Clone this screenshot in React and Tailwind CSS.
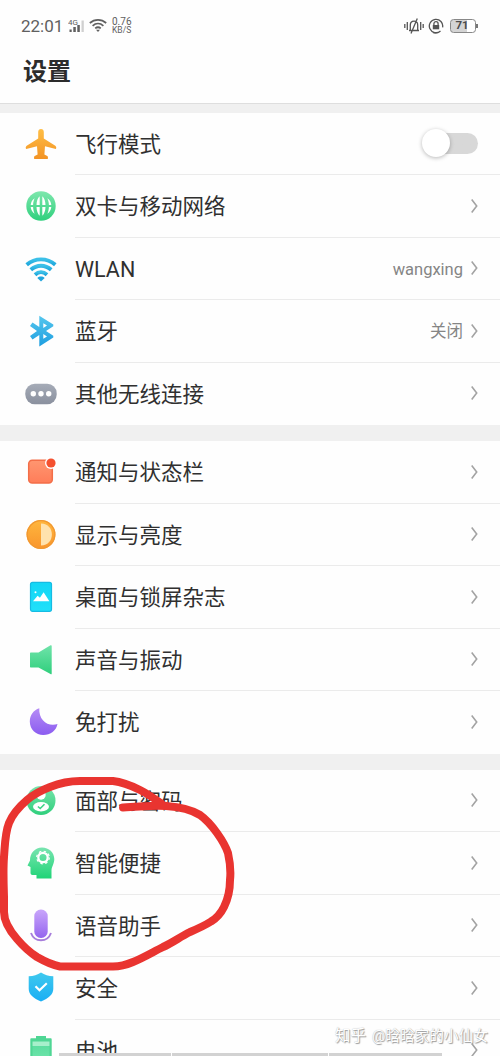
const CJK = 'font-["Roboto","Noto_Sans_CJK_SC",sans-serif]';

function Grad({ id, from, to }) {
  return (
    <linearGradient id={id} x1="0" y1="0" x2="0" y2="1">
      <stop offset="0" stopColor={from} />
      <stop offset="1" stopColor={to} />
    </linearGradient>
  );
}

function Glyph({ id, from, to, children }) {
  return (
    <svg width="34" height="34" viewBox="0 0 34 34" fill="none" className="block">
      <defs>
        <Grad id={id} from={from} to={to} />
      </defs>
      {children}
    </svg>
  );
}

const icons = {
  plane: (
    <Glyph id="plane" from="#ffbe45" to="#f29325">
      <path fill="url(#plane)" d="M17 2c1.700 0 2.800 1.200 2.800 3v6.500l11.500 7.300c1 .8 1.300 2.200.5 3.300L21 19.200l-.6 8.300 2.900 1.500c.8.700.8 2 .4 3H10.300c-.4-1-.4-2.300.4-3l2.900-1.500-.6-8.300-10.800 2.900c-.8-1.100-.5-2.500.5-3.300L14.200 11.500V5c0-1.800 1.100-3 2.800-3z" />
    </Glyph>
  ),
  globe: (
    <Glyph id="globe" from="#7ee7ad" to="#2fd07d">
      <circle cx="17" cy="17" r="14.700" fill="url(#globe)" />
      <path fill="#fff" d="M15.700 7.300v8.700h-3.200c.1-3.700 1.200-7 3.200-8.700zM18.300 7.300v8.700h3.200c-.1-3.700-1.200-7-3.200-8.700zM15.700 26.700v-8.700h-3.200c.1 3.700 1.200 7 3.200 8.700zM18.300 26.700v-8.700h3.200c-.1 3.700-1.200 7-3.200 8.700z" />
      <path fill="#fff" d="M10.700 9.300c-1 1.900-1.500 4.200-1.600 6.700H6.700c.2-2.900 1.700-5.200 4-6.700zM23.300 9.300c1 1.900 1.500 4.200 1.600 6.700h2.400c-.2-2.900-1.700-5.200-4-6.700zM10.700 24.700c-1-1.900-1.500-4.200-1.600-6.700H6.700c.2 2.900 1.700 5.200 4 6.700zM23.300 24.700c1-1.900 1.500-4.200 1.600-6.700h2.400c-.2 2.900-1.700 5.200-4 6.700z" />
    </Glyph>
  ),
  wifi: (
    <Glyph id="wifi" from="#3cc0e8" to="#20a8dc">
      <g stroke="url(#wifi)" strokeWidth="3.900">
        <path d="M2.700 12.700C11 5.600 23 5.600 31.300 12.700" />
        <path d="M6.800 17.800c6-5.400 14.400-5.400 20.400 0" />
        <path d="M11 22.700c3.600-3.200 8.400-3.200 12 0" />
      </g>
      <path fill="#20a5dd" d="M13.300 26c2.200-1.900 5.200-1.900 7.400 0L17 29.500z" />
    </Glyph>
  ),
  bluetooth: (
    <Glyph id="bt" from="#55c6ed" to="#1d9ee0">
      <path fill="url(#bt)" fillRule="evenodd" d="M15.300 1.800L29.300 10.500v1.700L22 17l7.300 4.800v1.700L15.300 32.500V21L8.500 25.500 6 22l7-5-7-5L8.500 8.500l6.800 4.500zM19.300 9.300v4.600l3.700-2.300zM19.300 20.100v4.600l3.700-2.300z" />
    </Glyph>
  ),
  more: (
    <Glyph id="more" from="#a5abb7" to="#8a909e">
      <rect x="1.300" y="6.700" width="31.400" height="20.600" rx="9.500" fill="url(#more)" />
      <g fill="#fff"><circle cx="9.300" cy="16.700" r="2.700" /><circle cx="17" cy="16.700" r="2.700" /><circle cx="24.700" cy="16.700" r="2.700" /></g>
    </Glyph>
  ),
  notice: (
    <Glyph id="notice" from="#ff9670" to="#ff7d59">
      <rect x="4.700" y="5.200" width="23.600" height="22.800" rx="3.500" fill="url(#notice)" stroke="#f36e48" strokeWidth="1.500" />
      <circle cx="27" cy="8" r="6" fill="#fff" />
      <circle cx="27" cy="8" r="4.600" fill="#f4512f" />
    </Glyph>
  ),
  display: (
    <Glyph id="display" from="#ffb73d" to="#f9952d">
      <circle cx="17" cy="16.500" r="14.500" fill="url(#display)" />
      <path fill="#ffe2ad" d="M17 5.500c14.500 0 14.500 22 0 22z" />
      <circle cx="17" cy="16.500" r="13.800" stroke="#f19831" strokeWidth="1.200" />
    </Glyph>
  ),
  desktop: (
    <Glyph id="desktop" from="#13d6f5" to="#21e0fa">
      <rect x="6.500" y="2.300" width="21" height="29" rx="2" fill="url(#desktop)" stroke="#16bbe3" strokeWidth="1.200" />
      <path fill="#fff" d="M9 21.200l4.600-5.500 2.300 2.100 3.700-5.600 5.800 9z" />
      <circle cx="11.500" cy="12.200" r="1" fill="#fff" />
    </Glyph>
  ),
  sound: (
    <Glyph id="sound" from="#70e3aa" to="#2fcf7c">
      <path fill="url(#sound)" d="M7 9.500h7.500L26.500 2.300c.8-.3 1.200 0 1.200.8v27.300c0 .8-.4 1.100-1.200.7L14.500 24.500H7c-.7 0-1-.3-1-1v-13c0-.7.3-1 1-1z" />
    </Glyph>
  ),
  moon: (
    <Glyph id="moon" from="#b58cf5" to="#8b5cf0">
      <path fill="url(#moon)" d="M15.300 3.200C9.500 5 5.800 10.200 5.800 16.500c0 7.800 6 13.600 13.500 13.600 7.200 0 13.100-4.500 14.200-11-9.500 3.200-19-4-18.200-15.900z" />
    </Glyph>
  ),
  face: (
    <Glyph id="face" from="#7be4ad" to="#2fcf7c">
      <circle cx="17" cy="16.500" r="14.500" fill="url(#face)" />
      <circle cx="17" cy="11" r="4.700" fill="#fff" />
      <ellipse cx="17" cy="22.700" rx="8" ry="4.700" fill="#fff" />
      <path d="M13.900 22.500l2.300 2 4.300-4.200" stroke="#3cd386" strokeWidth="1.600" />
    </Glyph>
  ),
  smart: (
    <Glyph id="smart" from="#79e4b0" to="#20d477">
      <path fill="url(#smart)" d="M18 1.500C25 1.500 30.300 6.500 30.300 13c0 5-2.800 7.500-2.800 11.500v8H12.500V29H8.500c-1.500 0-2-1-2-2.500V21l-3-1.500 2.500-5C6 7 11 1.500 18 1.500z" />
      <circle cx="19" cy="11.500" r="4.700" stroke="#fff" strokeWidth="2.300" />
      <circle cx="19" cy="11.500" r="6.300" stroke="#fff" strokeWidth="1.200" strokeDasharray="2.470 2.470" />
    </Glyph>
  ),
  voice: (
    <Glyph id="voice" from="#c9a6fb" to="#9465ee">
      <rect x="10.300" y="0.500" width="13.400" height="28.500" rx="6.500" fill="url(#voice)" />
      <path d="M7 24c3.500 9.700 16.500 9.700 20 0" stroke="#a77ddb" strokeWidth="1.900" />
    </Glyph>
  ),
  shield: (
    <Glyph id="shield" from="#3fc9ee" to="#1aaef4">
      <path fill="url(#shield)" d="M17 1.500c3.500 2.500 7.500 3.600 12.300 3.800v12.500c0 5.500-4.700 9.700-12.300 12.700-7.600-3-12.300-7.200-12.300-12.700V5.300C9.500 5.100 13.500 4 17 1.500z" />
      <path d="M11.500 15.200l4 4 7.300-7" stroke="#fff" strokeWidth="2.200" />
    </Glyph>
  ),
  battery: (
    <Glyph id="battery" from="#5ddda0" to="#78e8b0">
      <path fill="#4fd694" d="M12 2h10v2.300h4.500c.8 0 1.200.5 1.200 1.300V34H6.300V5.600c0-.8.4-1.300 1.200-1.300H12z" />
      <path fill="#a7efcb" d="M8.500 7.500h17V12h-17z" />
      <path fill="url(#battery)" d="M8.500 12h17v22h-17z" />
    </Glyph>
  ),
};

function Chevron() {
  return (
    <svg width="8" height="16" viewBox="0 0 8 16" fill="none" className="ml-[7px] block shrink-0">
      <path d="M1.700 1.600L6.700 8l-5 6.400" stroke="#a3a3a3" strokeWidth="1.600" />
    </svg>
  );
}

function Switch() {
  return (
    <div className="flex h-[21px] w-[56px] items-center rounded-full bg-linear-to-r from-transparent from-25% to-25% to-[#d8d8d8]">
      <div className="size-[28px] shrink-0 rounded-full bg-white shadow-[0_1px_4px_rgba(0,0,0,0.28)]" />
    </div>
  );
}

function Row({ icon, label, value, toggle, last }) {
  return (
    <div className="flex h-[62.5px] shrink-0 pl-[24px]">
      <div className="flex w-[51px] shrink-0 items-center">{icons[icon]}</div>
      <div className={`flex min-w-0 grow items-center border-b pr-[22px] ${last ? 'border-transparent' : 'border-[#ebebeb]'}`}>
        <span className="grow pt-[3px] text-[21.500px] leading-[30px] whitespace-nowrap text-[#303030]">{label}</span>
        {value && <span className="pt-[3px] text-[16.500px] leading-6 text-[#858585]">{value}</span>}
        {toggle ? <Switch /> : <Chevron />}
      </div>
    </div>
  );
}

const groups = [
  [
    { icon: 'plane', label: '飞行模式', toggle: true },
    { icon: 'globe', label: '双卡与移动网络' },
    { icon: 'wifi', label: 'WLAN', value: 'wangxing' },
    { icon: 'bluetooth', label: '蓝牙', value: '关闭' },
    { icon: 'more', label: '其他无线连接' },
  ],
  [
    { icon: 'notice', label: '通知与状态栏' },
    { icon: 'display', label: '显示与亮度' },
    { icon: 'desktop', label: '桌面与锁屏杂志' },
    { icon: 'sound', label: '声音与振动' },
    { icon: 'moon', label: '免打扰' },
  ],
  [
    { icon: 'face', label: '面部与密码' },
    { icon: 'smart', label: '智能便捷' },
    { icon: 'voice', label: '语音助手' },
    { icon: 'shield', label: '安全' },
    { icon: 'battery', label: '电池' },
  ],
];

function StatusBar() {
  return (
    <div className="flex h-[50px] shrink-0 items-center pt-[1px] pr-[22px] pl-[21px] text-[#606060]">
      <span className="w-[47px] text-[17px] leading-5">22:01</span>
      <svg width="17" height="16" viewBox="0 0 17 16" className="block">
        <text x="0" y="6.500" fontSize="8" fill="#606060">4G</text>
        <path fill="#606060" d="M1.500 11.500h2.200v2.500H1.500zM5.300 9h2.500v5H5.300zM9.300 7h2.500v7H9.300z" />
        <path fill="#d0d0d0" d="M13.500 2.500h2.300v11.500h-2.300z" />
      </svg>
      <svg width="18" height="15" viewBox="0 0 18 15" fill="none" stroke="#606060" strokeWidth="1.700" className="ml-[4px] block">
        <path d="M.8 5C5.600.8 12.400.8 17.200 5M3.600 7.800c3.200-2.800 7.600-2.800 10.800 0M6.200 10.400c1.700-1.400 3.900-1.400 5.600 0" />
        <path d="M7 11.800h4L9 14z" fill="#606060" stroke="none" />
      </svg>
      <div className="ml-[5px] grow leading-[9px]">
        <div className="text-[10px]">0.76</div>
        <div className="text-[8.500px]">KB/S</div>
      </div>
      <svg width="20" height="16" viewBox="0 0 20 16" fill="none" stroke="#555" strokeWidth="1.300" className="block">
        <path d="M.8 6v4M3.300 4v8M16.700 4v8M19.200 6v4M5 12.500h10M6.300 12.500V7c0-5.300 7.400-5.300 7.400 0v5.500M7 15.500L13.300.5" />
      </svg>
      <svg width="16" height="16" viewBox="0 0 16 16" fill="none" stroke="#555" strokeWidth="1.300" className="ml-[4px] block">
        <path d="M12.500 13A6.700 6.700 0 1 1 14.600 9.300M4.500 14.200a6.700 6.700 0 0 0 6 .1" />
        <path d="M5.900 7V5.800c0-2.800 4.200-2.800 4.200 0V7" />
        <path d="M4.800 7h6.400v4.300H4.800z" fill="#555" stroke="none" />
      </svg>
      <div className="ml-[6px] flex h-[14px] w-[26px] items-center justify-center rounded-[3.500px] border border-[#888] bg-linear-to-r from-[#d4d4d4] from-65% to-white to-65% pr-[2px] text-[11.500px] leading-none font-bold text-[#4c4c4c]">71</div>
      <div className="h-[4px] w-[2px] bg-[#777]" />
    </div>
  );
}

export default function App() {
  return (
    <div className={`relative flex h-[1056px] w-[500px] flex-col overflow-hidden bg-[#fefefe] ${CJK}`}>
      <StatusBar />
      <h1 className="h-[53px] shrink-0 pl-[23px] text-[24px] leading-[45px] font-bold text-[#2c2c2c]">设置</h1>
      <div className="h-[9.500px] shrink-0 border-t border-[#dedede] bg-[#f0f0f0]" />
      {groups.map((rows, g) => (
        <div key={g} className="shrink-0">
          {g > 0 && <div className="h-[16px] bg-[#f0f0f0]" />}
          {rows.map((row, i) => (
            <Row key={row.icon} {...row} last={i === rows.length - 1} />
          ))}
        </div>
      ))}
      <svg className="absolute top-0 left-0" width="500" height="1056" viewBox="0 0 500 1056" fill="none">
        <path
          d="M123 807.500C140 807 152 805 166 806C180 807 192 810 200 815C207 820 212 826 217 833C222 840 226 847 228 853C230 862 231 871 230 880C230 891 228 899 224 907C221 913 217 918 211 921.500C204 926 197 929 190 932C180 937 172 943 163 947C153 952 143 958 133 962C126 965 120 966.500 113 966.500H60C52 965 44 961 37 957C29 952 23 946 17 939C10 931 4 922 4 912L4 897C3.500 882 3 870 4 857C5 844 5 833 9 823C13 813 20 806 27 800C34 794 42 790 50 787C60 783 70 781 80 781H113C123 782 132 786 140 790C148 794 155 799 162 804"
          stroke="#e93430"
          strokeWidth="8"
          strokeLinecap="round"
          strokeLinejoin="round"
        />
      </svg>
      <div className="absolute bottom-0 left-[59px] flex h-[3px] w-[383px] gap-[1px]">
        <div className="w-[112px] bg-[#d2d2d2]" />
        <div className="w-[156px] bg-[#d2d2d2]" />
        <div className="grow bg-[#d2d2d2]" />
      </div>
      <div className="absolute top-[1025px] left-[335px] flex items-center gap-[6px] text-[15.500px] leading-[22px] whitespace-nowrap text-white [text-shadow:1px_1px_1px_#999,0_0_1px_#aaa]">
        <span>知乎</span>
        <span className="text-[14.700px]">@晗晗家的小仙女</span>
      </div>
    </div>
  );
}
